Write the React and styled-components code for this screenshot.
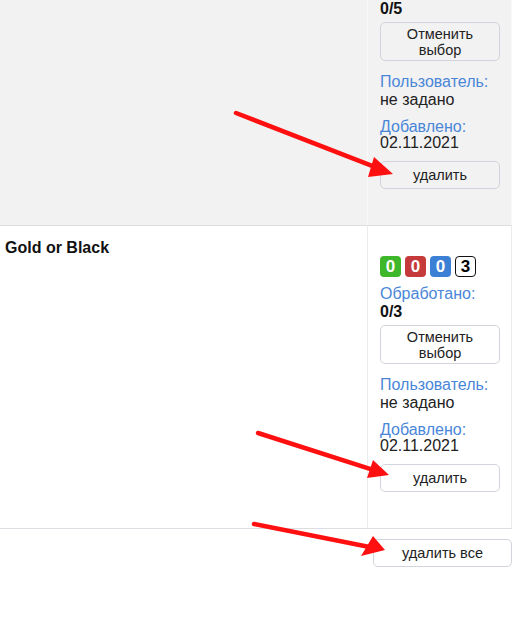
import React from "react";
import styled, { createGlobalStyle } from "styled-components";

const Global = createGlobalStyle`
  html, body { margin: 0; padding: 0; background: #fff; }
  body { font-family: "Liberation Sans", Arial, sans-serif; color: #222; }
`;

const Page = styled.div`
  position: relative;
  width: 526px;
  height: 623px;
  overflow: hidden;
`;

const Table = styled.div`
  width: 512px;
  border-bottom: 1px solid #dcdce3;
`;

const Row = styled.div`
  display: grid;
  grid-template-columns: 367px 145px;
  background: ${(p) => (p.$shaded ? "#f2f2f2" : "#fff")};
  border-bottom: ${(p) => (p.$divider ? "1px solid #dedede" : "none")};
`;

const TitleCell = styled.div`
  padding: ${(p) => p.$top}px 5px 0 5px;
  font-weight: bold;
  font-size: 16px;
  line-height: 18px;
  color: #111;
`;

const InfoCell = styled.div`
  display: flex;
  flex-direction: column;
  align-items: flex-start;
  padding: ${(p) => p.$top}px 12px 36px 12px;
  border-left: 1px solid ${(p) => (p.$shaded ? "#f9f9f9" : "#ececec")};
  border-right: 1px solid ${(p) => (p.$shaded ? "#f9f9f9" : "#ececec")};
  box-sizing: border-box;
`;

const Badges = styled.div`
  display: flex;
  gap: 4px;
  margin-bottom: 8px;
`;

const Badge = styled.span`
  box-sizing: border-box;
  width: 21px;
  height: 21px;
  border-radius: 4px;
  display: flex;
  align-items: center;
  justify-content: center;
  font-weight: bold;
  font-size: 17px;
  color: ${(p) => (p.$bg ? "#fff" : "#000")};
  background: ${(p) => p.$bg || "#fff"};
  border: ${(p) => (p.$bg ? "none" : "1px solid #111")};
`;

const Label = styled.div`
  color: #4a86d8;
  font-size: 16px;
  line-height: ${(p) => p.$lh || 18}px;
  margin-top: ${(p) => p.$mt || 0}px;
`;

const Value = styled.div`
  font-size: 16px;
  line-height: ${(p) => p.$lh || 18}px;
  font-weight: ${(p) => (p.$bold ? "bold" : "normal")};
  color: ${(p) => (p.$bold ? "#111" : "#222")};
`;

const Button = styled.button`
  box-sizing: border-box;
  width: ${(p) => p.$w || 120}px;
  height: ${(p) => p.$h || 28}px;
  margin-top: ${(p) => p.$mt || 0}px;
  padding: 0 4px;
  background: transparent;
  border: 1px solid #d3d3db;
  border-radius: 5px;
  font-family: "Liberation Sans", Arial, sans-serif;
  font-size: 14.5px;
  line-height: 16px;
  color: #222;
  text-align: center;
`;

const Footer = styled.div`
  width: 512px;
  display: flex;
  justify-content: flex-end;
  padding-top: 10px;
`;

const Overlay = styled.svg`
  position: absolute;
  left: 0;
  top: 0;
  pointer-events: none;
`;

function Arrow({ x1, y1, x2, y2, h1, h2 }) {
  return (
    <g>
      <line x1={x1} y1={y1} x2={x2 - (x2 - x1) * 0.08} y2={y2 - (y2 - y1) * 0.08} stroke="#ff1010" strokeWidth="4.5" strokeLinecap="round" />
      <polygon points={`${h1[0]},${h1[1]} ${x2},${y2} ${h2[0]},${h2[1]}`} fill="#ff1010" />
    </g>
  );
}

function Info({ top, shaded, badges, processed, count }) {
  return (
    <InfoCell $top={top} $shaded={shaded}>
      {badges && (
        <Badges>
          <Badge $bg="#3fb72b">0</Badge>
          <Badge $bg="#c53b3b">0</Badge>
          <Badge $bg="#3b80d5">0</Badge>
          <Badge>3</Badge>
        </Badges>
      )}
      {processed && <Label>Обработано:</Label>}
      <Value $bold>{count}</Value>
      <Button $h={39} $mt={4}>
        Отменить
        <br />
        выбор
      </Button>
      <Label $mt={12}>Пользователь:</Label>
      <Value>не задано</Value>
      <Label $mt={10} $lh={16}>Добавлено:</Label>
      <Value $lh={16}>02.11.2021</Value>
      <Button $mt={10}>удалить</Button>
    </InfoCell>
  );
}

export default function App() {
  return (
    <Page>
      <Global />
      <Table>
        <Row $shaded $divider>
          <TitleCell $top={0} />
          <Info top={0} shaded count="0/5" />
        </Row>
        <Row>
          <TitleCell $top={13}>Gold or Black</TitleCell>
          <Info top={30} badges processed count="0/3" />
        </Row>
      </Table>
      <Footer>
        <Button $w={139}>удалить все</Button>
      </Footer>
      <Overlay width="526" height="623" viewBox="0 0 526 623">
        <Arrow x1={236} y1={113} x2={393} y2={174} h1={[374, 157]} h2={[368, 177]} />
        <Arrow x1={258} y1={433} x2={389} y2={475} h1={[373, 460]} h2={[367, 478]} />
        <Arrow x1={254} y1={524} x2={385} y2={550} h1={[373, 536]} h2={[361, 556]} />
      </Overlay>
    </Page>
  );
}
